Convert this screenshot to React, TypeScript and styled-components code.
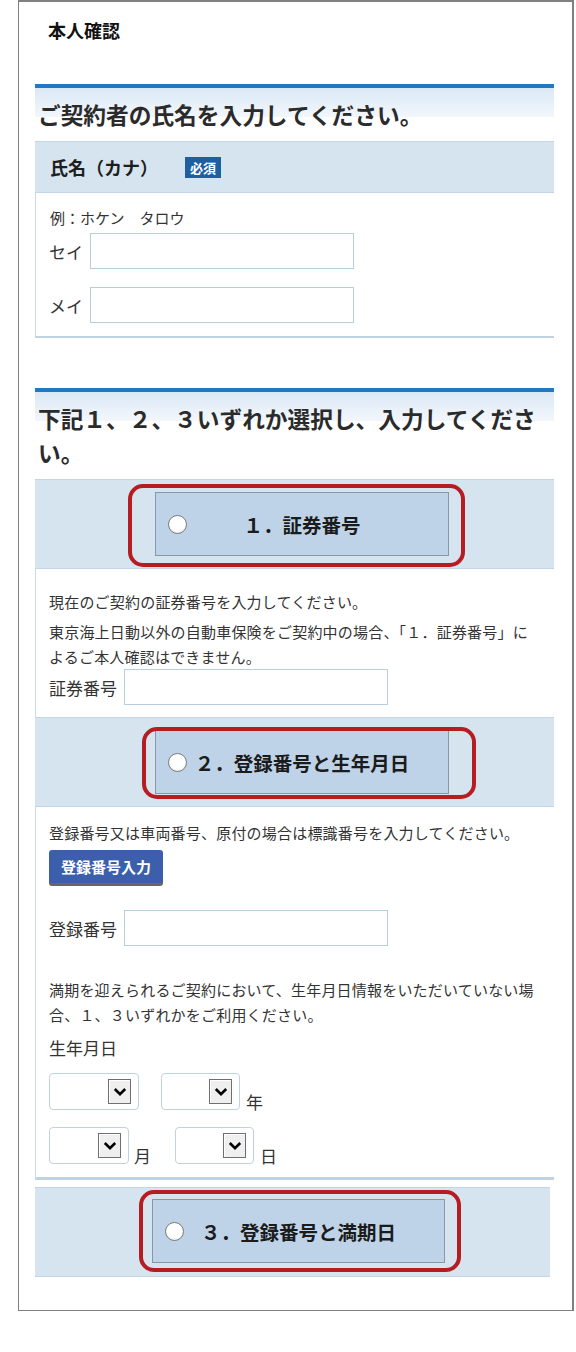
import React from "react";
import styled, { createGlobalStyle } from "styled-components";

const GlobalStyle = createGlobalStyle`
  html, body { margin: 0; padding: 0; background: #fff; }
  body { font-family: "Noto Sans CJK JP", "Noto Sans", sans-serif; color: #333; }
  *, *::before, *::after { box-sizing: border-box; }
`;

const Frame = styled.div`
  margin-left: 18px;
  width: 556px;
  border: solid #808080;
  border-width: 2px 2px 1px 1px;
  padding-bottom: 33px;
`;

const PageTitle = styled.h1`
  margin: 0;
  padding: 18px 0 0 29px;
  font-size: 18px;
  line-height: 20px;
  font-weight: 700;
  color: #111;
`;

const Content = styled.div`
  margin-left: 16px;
  width: 519px;
  overflow: hidden;
`;

const SectionHeading = styled.h2<{ $top: number }>`
  margin: ${(p) => p.$top}px 0 9px;
  border-top: 4px solid #2378c3;
  padding: 10px 0 0 3px;
  font-size: 22.7px;
  line-height: 34px;
  font-weight: 700;
  color: #2b2b2b;
  background: linear-gradient(#dbe8f5, #f2f7fc) no-repeat;
  background-size: 100% 29px;
`;

const Panel = styled.section<{ $width?: number; $top?: number }>`
  width: ${(p) => p.$width ?? 519}px;
  margin-top: ${(p) => p.$top ?? 0}px;
`;

const FieldHeader = styled.div`
  display: flex;
  align-items: center;
  height: 52px;
  padding-left: 15px;
  background: #d6e4f0;
  border-top: 1px solid #c3d5e5;
  border-bottom: 1px solid #c3d5e5;
  font-size: 18px;
  font-weight: 700;
  color: #1e1e1e;
`;

const RequiredBadge = styled.span`
  margin-left: 27px;
  display: inline-flex;
  align-items: center;
  justify-content: center;
  width: 36px;
  height: 21px;
  background: #1f5f9f;
  color: #fff;
  font-size: 13px;
  font-weight: 700;
`;

const PanelBody = styled.div<{ $pt: number; $pb: number; $bottom?: number }>`
  border-left: 1px solid #c8d9e7;
  border-bottom: ${(p) => p.$bottom ?? 0}px solid #bfd3e3;
  padding: ${(p) => p.$pt}px 14px ${(p) => p.$pb}px 13px;
`;

const Example = styled.p`
  margin: 0 0 0 1px;
  font-size: 15px;
  line-height: 20px;
  color: #333;
`;

const Note = styled.p<{ $mt?: number }>`
  margin: ${(p) => p.$mt ?? 0}px 0 0;
  font-size: 15px;
  line-height: 25px;
  letter-spacing: 0.2px;
  color: #333;
  white-space: nowrap;
`;

const FieldRow = styled.div<{ $mt?: number }>`
  display: flex;
  align-items: center;
  gap: 7px;
  margin-top: ${(p) => p.$mt ?? 0}px;
`;

const FieldLabel = styled.span`
  font-size: 17px;
  line-height: 25px;
  color: #333;
`;

const BlockLabel = styled.div<{ $mt?: number }>`
  margin-top: ${(p) => p.$mt ?? 0}px;
  font-size: 17px;
  line-height: 25px;
  color: #333;
`;

const TextInput = styled.input`
  width: 264px;
  height: 36px;
  border: 1px solid #b7cfdc;
  border-radius: 0;
  padding: 0 6px;
  background: #fff;
  font-size: 15px;
  outline: none;
`;

const OptionHeader = styled.div<{ $indent: number; $pt: number; $pb: number }>`
  background: #d6e4f0;
  border-top: 1px solid #c3d5e5;
  border-bottom: 1px solid #c3d5e5;
  padding: ${(p) => p.$pt}px 0 ${(p) => p.$pb}px ${(p) => p.$indent}px;
`;

type Ring = { t: number; r: number; b: number; l: number };

const OptionButton = styled.label<{ $width: number; $ring: Ring }>`
  position: relative;
  display: grid;
  grid-template-columns: 1fr auto 1fr;
  align-items: center;
  width: ${(p) => p.$width}px;
  height: 64px;
  background: #bed3e8;
  border: 1px solid #8797a6;
  font-size: 19.5px;
  font-weight: 700;
  color: #1b1b1b;
  cursor: pointer;

  &::after {
    content: "";
    position: absolute;
    top: ${(p) => p.$ring.t}px;
    right: ${(p) => p.$ring.r}px;
    bottom: ${(p) => p.$ring.b}px;
    left: ${(p) => p.$ring.l}px;
    border: 4px solid #b51d23;
    border-radius: 15px;
    pointer-events: none;
  }
`;

const Radio = styled.span`
  justify-self: start;
  margin-left: 12px;
  width: 19px;
  height: 19px;
  border-radius: 50%;
  border: 1px solid #7b7b7b;
  background: radial-gradient(circle at 50% 40%, #ffffff 55%, #e4e4e4 100%);
`;

const OptionText = styled.span`
  white-space: nowrap;
`;

const ActionButton = styled.button`
  display: block;
  margin-top: 5px;
  height: 33px;
  padding: 0 12px;
  background: #3c5fab;
  color: #fff;
  border: none;
  border-radius: 3px;
  box-shadow: 0 3px 0 #666;
  font-family: "Noto Sans CJK JP", sans-serif;
  font-size: 15px;
  font-weight: 700;
  line-height: 33px;
`;

const DateRow = styled.div<{ $mt: number }>`
  display: flex;
  align-items: flex-end;
  margin-top: ${(p) => p.$mt}px;
`;

const SelectBox = styled.div<{ $w: number; $ml?: number }>`
  width: ${(p) => p.$w}px;
  height: 37px;
  margin-left: ${(p) => p.$ml ?? 0}px;
  border: 1px solid #bdd3e2;
  border-radius: 4px;
  background: #fff;
  display: flex;
  align-items: center;
  justify-content: flex-end;
  padding-right: 7px;
`;

const ArrowBox = styled.span`
  width: 23px;
  height: 25px;
  border: 1px solid #6f6f6f;
  background: #efefef;
  box-shadow: inset 1px 1px 0 #fff;
  display: flex;
  align-items: center;
  justify-content: center;
`;

const Unit = styled.span<{ $ml: number }>`
  margin-left: ${(p) => p.$ml}px;
  margin-bottom: -2px;
  font-size: 17px;
  line-height: 20px;
  color: #333;
`;

const Select = ({ w, ml }: { w: number; ml?: number }) => (
  <SelectBox $w={w} $ml={ml} role="combobox">
    <ArrowBox>
      <svg width="14" height="10" viewBox="0 0 14 10">
        <polyline points="1.8,2 7,7.2 12.2,2" fill="none" stroke="#000" strokeWidth="2.6" />
      </svg>
    </ArrowBox>
  </SelectBox>
);

const Option = ({ width, ring, label }: { width: number; ring: Ring; label: string }) => (
  <OptionButton $width={width} $ring={ring}>
    <Radio />
    <OptionText>{label}</OptionText>
    <span />
  </OptionButton>
);

export default function App() {
  return (
    <>
      <GlobalStyle />
      <Frame>
        <PageTitle>本人確認</PageTitle>
        <Content>
          <SectionHeading $top={44}>ご契約者の氏名を入力してください。</SectionHeading>
          <Panel>
            <FieldHeader>
              氏名（カナ）<RequiredBadge>必須</RequiredBadge>
            </FieldHeader>
            <PanelBody $pt={15} $pb={13} $bottom={2}>
              <Example>例：ホケン　タロウ</Example>
              <FieldRow $mt={5}>
                <FieldLabel>セイ</FieldLabel>
                <TextInput />
              </FieldRow>
              <FieldRow $mt={18}>
                <FieldLabel>メイ</FieldLabel>
                <TextInput />
              </FieldRow>
            </PanelBody>
          </Panel>

          <SectionHeading $top={50}>
            下記１、２、３いずれか選択し、入力してくださ<br />い。
          </SectionHeading>
          <Panel>
            <OptionHeader $indent={120} $pt={12} $pb={12}>
              <Option width={294} ring={{ t: -9, r: -17, b: -12, l: -28 }} label="１．証券番号" />
            </OptionHeader>
            <PanelBody $pt={20} $pb={12}>
              <Note>現在のご契約の証券番号を入力してください。</Note>
              <Note $mt={5}>
                東京海上日動以外の自動車保険をご契約中の場合、「１．証券番号」に
                <br />
                よるご本人確認はできません。
              </Note>
              <FieldRow>
                <FieldLabel>証券番号</FieldLabel>
                <TextInput />
              </FieldRow>
            </PanelBody>
            <OptionHeader $indent={120} $pt={12} $pb={12}>
              <Option width={294} ring={{ t: -4, r: -28, b: -6, l: -14 }} label="２．登録番号と生年月日" />
            </OptionHeader>
            <PanelBody $pt={13} $pb={13} $bottom={3}>
              <Note>登録番号又は車両番号、原付の場合は標識番号を入力してください。</Note>
              <ActionButton type="button">登録番号入力</ActionButton>
              <FieldRow $mt={27}>
                <FieldLabel>登録番号</FieldLabel>
                <TextInput />
              </FieldRow>
              <Note $mt={31}>
                満期を迎えられるご契約において、生年月日情報をいただいていない場
                <br />
                合、１、３いずれかをご利用ください。
              </Note>
              <BlockLabel $mt={8}>生年月日</BlockLabel>
              <DateRow $mt={13}>
                <Select w={90} />
                <Select w={79} ml={22} />
                <Unit $ml={6}>年</Unit>
              </DateRow>
              <DateRow $mt={17}>
                <Select w={80} />
                <Unit $ml={5}>月</Unit>
                <Select w={79} ml={24} />
                <Unit $ml={6}>日</Unit>
              </DateRow>
            </PanelBody>
          </Panel>

          <Panel $width={515} $top={7}>
            <OptionHeader $indent={117} $pt={11} $pb={13}>
              <Option width={293} ring={{ t: -10, r: -17, b: -10, l: -14 }} label="３．登録番号と満期日" />
            </OptionHeader>
          </Panel>
        </Content>
      </Frame>
    </>
  );
}
